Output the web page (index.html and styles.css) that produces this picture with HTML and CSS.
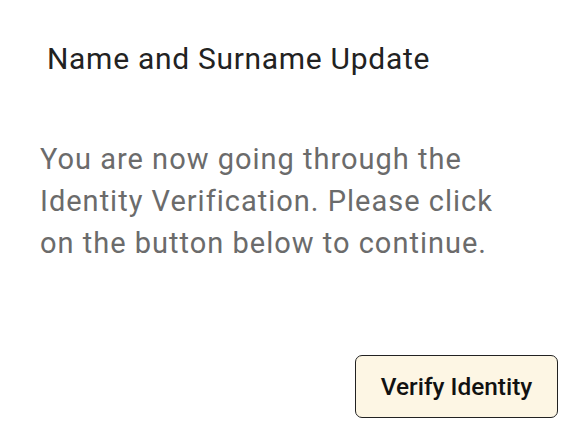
FILE: index.html
```html
<!DOCTYPE html>
<html>
<head>
<meta charset="utf-8">
<link rel="stylesheet" href="styles.css">
</head>
<body>
<div class="dialog">
  <h1 class="title">Name and Surname Update</h1>
  <p class="message">You are now going through the Identity Verification. Please click on the button below to continue.</p>
  <div class="actions">
    <button class="verify">Verify Identity</button>
  </div>
</div>
</body>
</html>
```
FILE: styles.css
```css
html, body {
  margin: 0;
  padding: 0;
  background: #ffffff;
}
body {
  font-family: Roboto, "Liberation Sans", sans-serif;
  width: 573px;
  height: 431px;
  overflow: hidden;
}
.dialog {
  box-sizing: border-box;
  width: 573px;
  height: 431px;
  background: #fff;
  display: flex;
  flex-direction: column;
  padding: 0 15px 13px 40px;
}
.title {
  margin: 38px 0 0 7px;
  font-size: 30px;
  font-weight: 400;
  letter-spacing: 0.7px;
  color: #222;
  line-height: 42px;
}
.message {
  margin: 58px 0 0 0;
  width: 475px;
  font-size: 29px;
  letter-spacing: 1px;
  line-height: 42px;
  color: #6b6b6b;
}
.actions {
  margin-top: auto;
  display: flex;
  justify-content: flex-end;
}
.verify {
  font-family: Roboto, "Liberation Sans", sans-serif;
  font-size: 24.4px;
  font-weight: 500;
  color: #111;
  background: #fdf6e4;
  border: 1px solid #222;
  border-radius: 7px;
  width: 203px;
  height: 63px;
  padding: 0;
}
```
